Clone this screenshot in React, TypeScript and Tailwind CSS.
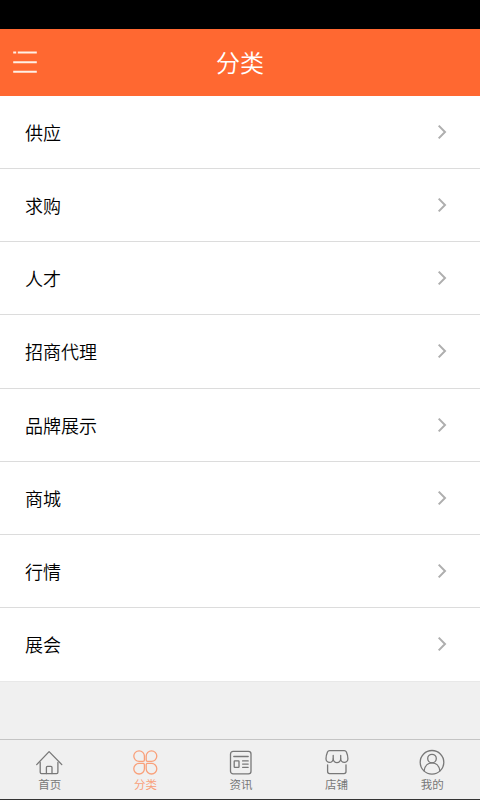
import type { ReactNode } from "react";

const categories = [
  "供应",
  "求购",
  "人才",
  "招商代理",
  "品牌展示",
  "商城",
  "行情",
  "展会",
];

const TabIcon = ({ children }: { children: ReactNode }) => (
  <svg
    viewBox="0 0 28 28"
    className="w-7 h-7"
    fill="none"
    stroke="currentColor"
    strokeWidth="1.3"
    strokeLinecap="round"
    strokeLinejoin="round"
  >
    {children}
  </svg>
);

const tabs = [
  {
    label: "首页",
    icon: (
      <>
        <path d="M0.7 16.6 L13.1 3.6 L25.8 16.6" />
        <path d="M4.2 14.5 V24.3 Q4.2 25.6 5.5 25.6 H20.6 Q21.9 25.6 21.9 24.3 V14.5" />
        <path d="M10.4 25.6 V19.4 Q10.4 18.4 11.4 18.4 H15 Q16 18.4 16 19.4 V25.6" />
      </>
    ),
  },
  {
    label: "分类",
    icon: (
      <>
        <path d="M12 13.4 H8.1 A5.3 5.3 0 1 1 13.4 8.1 V12 Q13.4 13.4 12 13.4 Z" />
        <path d="M16.6 13.4 Q15.2 13.4 15.2 12 V8.1 A5.3 5.3 0 1 1 20.5 13.4 Z" />
        <path d="M12 15.4 Q13.4 15.4 13.4 16.8 V20.7 A5.3 5.3 0 1 1 8.1 15.4 Z" />
        <path d="M16.6 15.4 H20.5 A5.3 5.3 0 1 1 15.2 20.7 V16.8 Q15.2 15.4 16.6 15.4 Z" />
      </>
    ),
  },
  {
    label: "资讯",
    icon: (
      <>
        <rect x="3.5" y="3.4" width="20.5" height="22.4" rx="2.6" />
        <path d="M6.8 8.5 H21.2 M15.6 12.9 H21.2 M15.6 16.1 H21.2 M15.6 19.3 H21.2" />
        <rect x="7.2" y="12.9" width="4.8" height="6.4" rx="0.6" />
      </>
    ),
  },
  {
    label: "店铺",
    icon: (
      <>
        <path d="M6.6 2.6 H21.2 Q22.8 2.6 23.4 4 Q24.9 7.4 24.9 10.8 A3.6 3.6 0 0 1 17.7 10.8 A3.75 3.75 0 0 1 10.2 10.8 A3.6 3.6 0 0 1 3 10.8 Q3 7.4 4.5 4 Q5.1 2.6 6.6 2.6 Z" />
        <path d="M10.2 7.4 V10.8 M17.7 7.4 V10.8" />
        <path d="M4.6 16.8 V23.6 Q4.6 25.6 6.6 25.6 H21 Q23 25.6 23 23.6 V16.8" />
      </>
    ),
  },
  {
    label: "我的",
    icon: (
      <>
        <circle cx="14" cy="14.3" r="11.8" />
        <circle cx="14" cy="10.6" r="4.3" />
        <path d="M6.1 22.8 C7.6 12.2 20.4 12.2 21.9 22.8" />
      </>
    ),
  },
];

export default function App() {
  const active = "分类";

  return (
    <div className="w-[480px] h-[800px] flex flex-col overflow-hidden bg-[#f0f0f0] font-['Noto_Sans_CJK_SC',sans-serif]">
      {/* status bar */}
      <div className="h-[29px] flex-none bg-black" />

      <header className="h-[66.5px] flex-none grid grid-cols-[1fr_auto_1fr] items-center bg-[#ff6831] text-white">
        <button className="ml-[13px] w-6">
          <svg
            viewBox="0 0 24 24"
            className="w-6 h-6"
            stroke="#fff0e6"
            strokeWidth="2"
          >
            <path d="M0.2 2.6 H3.2 M4.8 2.6 H23.8 M0.2 12.3 H23.8 M0.2 21.8 H23.8" />
          </svg>
        </button>
        <h1 className="text-[24px] leading-8 font-[350]">分类</h1>
      </header>

      <ul className="h-[585.98px] flex-none flex flex-col bg-white">
        {categories.map((name) => (
          <li
            key={name}
            className="flex-1 flex items-center justify-between pl-[25px] pr-[33px] border-b border-[#dcdcdc] last:border-[#e8e8e8]"
          >
            <span className="text-[18px] leading-6 text-black font-[350]">
              {name}
            </span>
            <svg
              viewBox="0 0 10 16"
              className="w-[10px] h-4"
              fill="none"
              stroke="#aeaeae"
              strokeWidth="2"
            >
              <path d="M1.7 1.6 L8 8 L1.7 14.4" />
            </svg>
          </li>
        ))}
      </ul>

      <nav className="mt-auto h-[61px] flex-none flex pl-[2px] pt-2 border-t border-t-[#c4c4c4] border-b border-b-[#333]">
        {tabs.map((tab) => (
          <button
            key={tab.label}
            className={`flex-1 flex flex-col items-center ${
              tab.label === active ? "text-[#f9a07a]" : "text-[#787878]"
            }`}
          >
            <TabIcon>{tab.icon}</TabIcon>
            <span className="text-[11.5px] leading-4">{tab.label}</span>
          </button>
        ))}
      </nav>
    </div>
  );
}
